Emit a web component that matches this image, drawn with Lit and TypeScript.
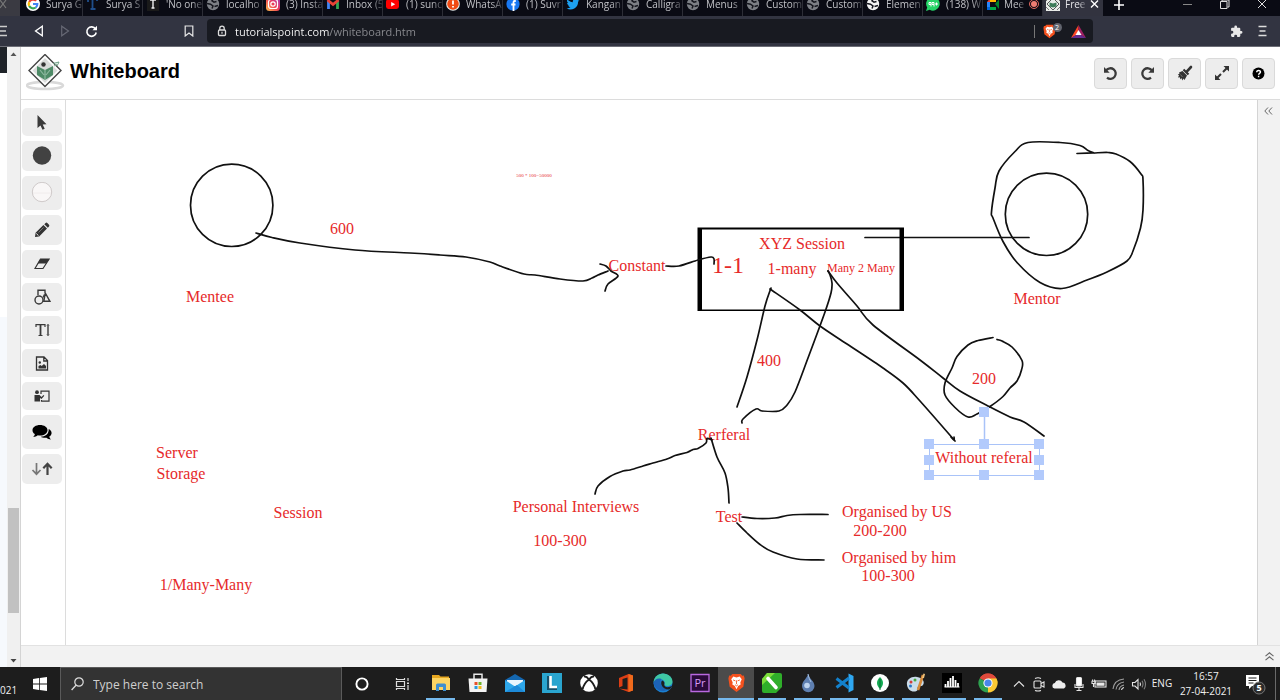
import { LitElement, html, svg, css } from "lit";
import { customElement } from "lit/decorators.js";
import { classMap } from "lit/directives/class-map.js";

type Pt = [number, number];

/** Turns a list of sampled pen points into a smooth path. */
function stroke(points: Pt[]): string {
  let d = `M${points[0][0]} ${points[0][1]}`;
  for (let i = 0; i < points.length - 1; i++) {
    const p0 = points[Math.max(i - 1, 0)];
    const p1 = points[i];
    const p2 = points[i + 1];
    const p3 = points[Math.min(i + 2, points.length - 1)];
    const c = [
      p1[0] + (p2[0] - p0[0]) / 6, p1[1] + (p2[1] - p0[1]) / 6,
      p2[0] - (p3[0] - p1[0]) / 6, p2[1] - (p3[1] - p1[1]) / 6,
      p2[0], p2[1],
    ].map((n) => n.toFixed(1));
    d += `C${c.join(" ")}`;
  }
  return d;
}

const STROKES: Pt[][] = [
  [[256, 233], [272, 237.5], [300, 243], [355, 250], [410, 253], [440, 255], [466, 257], [490, 262], [500, 266], [524, 274], [535, 275], [560, 279], [583, 281], [592, 278], [598, 275], [608, 271]],
  [[600, 264], [606, 266], [611, 271], [618, 276], [608, 284], [605, 291]],
  [[666, 266], [679, 266], [698, 260], [711, 257], [714, 259], [714, 264]],
  [[771, 288], [765, 306], [757, 340], [747, 377], [737, 407]],
  [[770, 289], [800, 310], [820, 326], [847, 344], [883, 368], [903, 383], [920, 401], [955, 441]],
  [[951, 437], [954, 440], [954, 437]],
  [[828, 271], [830, 275], [832, 283], [831, 293], [825, 312], [808, 358], [795, 392], [787, 405], [779, 411], [762, 411], [756, 409], [743, 419], [742, 423]],
  [[828, 271], [837, 283], [857, 306], [873, 325], [920, 360], [943, 378], [960, 391], [988, 406], [1010, 417], [1024, 422], [1044, 436]],
  [[1077, 153.5], [1093, 153], [1108, 152.5], [1116, 154], [1130, 161.5], [1141, 174], [1143, 180], [1143, 210], [1140.5, 228], [1133, 251], [1127, 261], [1107, 272], [1087, 280], [1062, 288.5], [1040, 282.5], [1017, 262.5], [1003, 241.5], [993, 218], [991.5, 212], [995, 188], [999, 171], [1015, 151.5], [1028, 142.5], [1060, 142.5], [1080, 145.5], [1088, 150.5], [1094, 153]],
  [[993, 337.5], [978, 340.5], [968, 345], [957, 356.5], [952, 368], [945, 383], [945, 395], [955, 407.5], [968, 417], [977, 414], [990, 406.5], [1003, 396.5], [1010, 388], [1017, 381], [1021.5, 370], [1022, 360.5], [1012, 347], [1002, 341], [997, 339.5]],
  [[712, 440], [707, 438.5], [706, 443], [698, 448.5], [693, 449.5], [687, 452.5], [675, 455.5], [667, 459], [653, 463], [643, 466], [630, 470], [623, 471], [610, 476.5], [598, 486], [595, 494]],
  [[711, 438], [717, 457], [725, 473], [728, 488], [729, 503]],
  [[742, 517], [757, 518.5], [775, 518], [787, 515.5], [800, 514.5], [828, 514.5]],
  [[737, 523], [747, 533], [760, 544.5], [773, 552], [797, 559], [824, 560]],
];

const LABELS: { x: number; y: number; text: string; size?: string }[] = [
  { x: 342, y: 234, text: "600" },
  { x: 534, y: 177, text: "500 * 100=50000", size: "tiny" },
  { x: 210, y: 302, text: "Mentee" },
  { x: 637, y: 271, text: "Constant" },
  { x: 802, y: 249, text: "XYZ Session" },
  { x: 728, y: 273, text: "1-1", size: "large" },
  { x: 792, y: 274, text: "1-many" },
  { x: 861, y: 272, text: "Many 2 Many", size: "small" },
  { x: 1037, y: 304, text: "Mentor" },
  { x: 769, y: 366, text: "400" },
  { x: 984, y: 384, text: "200" },
  { x: 724, y: 440, text: "Rerferal" },
  { x: 984, y: 463, text: "Without referal" },
  { x: 177, y: 458, text: "Server" },
  { x: 181, y: 479, text: "Storage" },
  { x: 298, y: 518, text: "Session" },
  { x: 206, y: 590, text: "1/Many-Many" },
  { x: 576, y: 512, text: "Personal Interviews" },
  { x: 560, y: 546, text: "100-300" },
  { x: 729, y: 522, text: "Test" },
  { x: 897, y: 517, text: "Organised by US" },
  { x: 880, y: 536, text: "200-200" },
  { x: 899, y: 563, text: "Organised by him" },
  { x: 888, y: 581, text: "100-300" },
];

const HANDLES: Pt[] = [
  [929, 444], [984, 444], [1039, 444], [929, 460], [1039, 460],
  [929, 475], [984, 475], [1039, 475], [984, 412],
];

const globe = (bg: string, fg: string) => svg`<svg width="14" height="14" viewBox="0 0 14 14"><circle cx="7" cy="7" r="6.200" fill=${bg}/><path d="M1 6.500 4.500 7.200 7 9 6 11.500M7.500 1.500 6 3.800l2 1.400 2.500-.7M8.500 9.500l3.500-1" fill="none" stroke=${fg} stroke-width="1.500"/></svg>`;

const FAV: Record<string, unknown> = {
  google: svg`<svg width="14" height="14" viewBox="0 0 14 14"><circle cx="7" cy="7" r="7" fill="#fff"/><g fill="none" stroke-width="2.200"><path d="M10.200 3.800A4.400 4.400 0 0 0 3.200 5" stroke="#ea4335"/><path d="M3.200 5a4.400 4.400 0 0 0 0 4" stroke="#fbbc05"/><path d="M3.200 9a4.400 4.400 0 0 0 6.600 1.500" stroke="#34a853"/><path d="M9.800 10.500A4.400 4.400 0 0 0 11.300 7H7" stroke="#4285f4"/></g></svg>`,
  tt: svg`<svg width="14" height="14" viewBox="0 0 14 14"><path d="M2 5V2h9v2M6.500 2v10M4.500 12h5" stroke="#1f4e8c" stroke-width="1.800" fill="none"/></svg>`,
  tw: svg`<svg width="14" height="14" viewBox="0 0 14 14"><path d="M1 0h12v14H1z" fill="#1a1a1a"/><path d="M4 3h6M7 3v8M5.500 11h3" stroke="#f0f0f0" stroke-width="1.400"/></svg>`,
  globe: globe("#7d8086", "#16171f"),
  globeLight: globe("#f4f4f4", "#16171f"),
  insta: svg`<svg width="14" height="14" viewBox="0 0 14 14"><defs><linearGradient id="ig" x1="0" y1="1" x2="1" y2="0"><stop offset="0" stop-color="#fdc04a"/><stop offset=".5" stop-color="#ee3a55"/><stop offset="1" stop-color="#9a37c4"/></linearGradient></defs><rect width="14" height="14" rx="3.500" fill="url(#ig)"/><rect x="2.500" y="2.500" width="9" height="9" rx="2.600" fill="none" stroke="#fff" stroke-width="1.200"/><circle cx="7" cy="7" r="2.200" fill="none" stroke="#fff" stroke-width="1.200"/></svg>`,
  gmail: svg`<svg width="14" height="14" viewBox="0 0 14 14"><path d="M2.500 12V3.500" stroke="#4285f4" stroke-width="2.800"/><path d="M11.500 12V3.500" stroke="#34a853" stroke-width="2.800"/><path d="M1.500 3 7 7.500 12.500 3" fill="none" stroke="#ea4335" stroke-width="2.800"/></svg>`,
  youtube: svg`<svg width="14" height="14" viewBox="0 0 14 14"><rect x="0" y="2.500" width="13" height="9.500" rx="2.400" fill="#f00"/><path d="m5.200 5 4 2.300-4 2.300z" fill="#fff"/></svg>`,
  alert: svg`<svg width="14" height="14" viewBox="0 0 14 14"><circle cx="7" cy="7" r="6.800" fill="#e8f0f0"/><circle cx="7" cy="7" r="5.800" fill="#f04a14"/><path d="M7 3.500v4M7 9v1.600" stroke="#fff" stroke-width="1.800"/></svg>`,
  facebook: svg`<svg width="14" height="14" viewBox="0 0 14 14"><circle cx="7" cy="7" r="6.600" fill="#1877f2"/><path d="M9.800 4H8.600c-.8 0-1.100.5-1.100 1.200V14M5.200 7.500h4.300" stroke="#fff" stroke-width="1.800" fill="none"/></svg>`,
  twitter: svg`<svg width="14" height="14" viewBox="0 0 24 24"><path fill="#1da1f2" d="M23 5.500c-.8.400-1.700.6-2.600.7.900-.6 1.600-1.400 2-2.500-.9.500-1.800.9-2.900 1.100a4.500 4.500 0 0 0-7.700 4.100C8 8.700 4.700 6.900 2.500 4.200a4.500 4.500 0 0 0 1.400 6c-.7 0-1.400-.2-2-.5 0 2.200 1.500 4 3.600 4.500-.7.200-1.400.2-2 .1.600 1.800 2.200 3.100 4.200 3.100A9 9 0 0 1 1 19.300 12.800 12.800 0 0 0 20.700 8c.9-.7 1.700-1.500 2.300-2.500z"/></svg>`,
  whatsapp: svg`<svg width="14" height="14" viewBox="0 0 14 14"><path d="M7 0a6.800 6.800 0 1 1-3.300 12.800L0 14l1.200-3.500A6.800 6.800 0 0 1 7 0z" fill="#25d366"/><path d="M3 5.500h2v2H3zm0 2h2v2M6 5.500h2v2H6zm2 2v2M9 7h3M10.500 5.500v3" stroke="#fff" fill="none"/></svg>`,
  meet: svg`<svg width="14" height="14" viewBox="0 0 14 14"><path d="M1 5l3-3.500V5z" fill="#ea4335"/><path d="M1 5h3v5H1z" fill="#2684fc"/><path d="M1 10h3v3H1z" fill="#0066da"/><path d="M4 10h6v3H4z" fill="#00ac47"/><path d="M4 1.500h6V5H4z" fill="#ffba00"/><path d="M9 7l4-4.500v9.500z" fill="#00832d"/></svg>`,
  point: svg`<svg width="14" height="14" viewBox="0 0 14 14"><path d="M0 0h14v14H0z" fill="#e9ece9"/><path d="M7 1l6 6-6 6-6-6z" fill="none" stroke="#333" stroke-width=".8"/><path d="M3.500 5.500 7 6.500l3.500-1v4L7 10.500l-3.500-1z" fill="#3f7d5a"/><path d="M0 4l3-3M11 1l3 3M0 10l3 3M14 10l-3 3" stroke="#555" stroke-width=".8"/></svg>`,
};

const TABS: [string, string][] = [
  ["google", "Surya G"], ["tt", "Surya S"], ["tw", "'No one"], ["globe", "localho"],
  ["insta", "(3) Insta"], ["gmail", "Inbox (5"], ["youtube", "(1) sunc"], ["alert", "WhatsA"],
  ["facebook", "(1) Suvr"], ["twitter", "Kangan"], ["globe", "Calligra"], ["globe", "Menus"],
  ["globe", "Custom"], ["globe", "Custom"], ["globeLight", "Elemen"], ["whatsapp", "(138) W"],
];

const lion = (w: number, h: number) => svg`<svg width=${w} height=${h} viewBox="0 0 16 19"><path d="M4 1h8l1.500 1.600 1.500-.2.700 2.800L14.500 13 8 18 1.500 13 .3 5.200l.7-2.800 1.500.2z" fill="#f4511e"/><path d="M8 4.200l3-.8 2 2.600-1.400 3 .4 2L9.600 12.400 8 15.400l-1.600-3L4 11l.4-2L3 6l2-2.600z" fill="#fff"/><path d="M4.800 6.600l2.200.9M11.200 6.600 9 7.500M8 7v3.500M6.600 11.200 8 12.200l1.400-1" stroke="#f4511e" stroke-width=".8" fill="none"/></svg>`;

const TOOLS: { label: string; size: string; icon: unknown }[] = [
  { label: "Select", size: "short", icon: svg`<svg width="16" height="16" viewBox="0 0 16 16"><path d="M3.500 1v13l3-2.600 2 4.300 2.200-1-2-4.200 3.800-.3z" fill="#3a3a3a"/></svg>` },
  { label: "Line colour", size: "mid", icon: svg`<svg width="20" height="20" viewBox="0 0 20 20"><circle cx="10" cy="9.500" r="9.200" fill="#424242"/></svg>` },
  { label: "Fill colour", size: "tall", icon: svg`<svg width="22" height="22" viewBox="0 0 22 22"><circle cx="11" cy="10" r="9.700" fill="#f9f7f7" stroke="#cfcaca"/><path d="M2 11h18" stroke="#f0ecec"/></svg>` },
  { label: "Pencil", size: "mid", icon: svg`<svg width="16" height="16" viewBox="0 0 16 16"><path d="M1 15l.6-4.200L9.400 3l3.600 3.600-7.800 7.800zM10.300 2.200l1.300-1.300q.9-.6 1.700.1l1.700 1.700q.7.900 0 1.700l-1.200 1.300z" fill="#333"/><path d="M2.300 11.500l2.200 2.200" stroke="#ededed"/><path d="M4.500 10.500l5-5" stroke="#888" stroke-width=".8"/></svg>` },
  { label: "Eraser", size: "short", icon: svg`<svg width="16" height="12" viewBox="0 0 16 12"><path d="M6.500 1H15.200L9 10.500H1z" fill="none" stroke="#333" stroke-width="1.200"/><path d="M3.500 5.500h8.800L15.200 1H6.500z" fill="#333"/></svg>` },
  { label: "Shapes", size: "short", icon: svg`<svg width="17" height="16" viewBox="0 0 17 16" fill="none" stroke="#3a3a3a" stroke-width="1.400"><path d="M4 6V1.200h7V4M11.300 4l4.600 8.300H9.800z"/><circle cx="5" cy="11" r="4"/><path d="M9 8.500l1.500-3"/></svg>` },
  { label: "Text", size: "short", icon: svg`<svg width="15" height="14" viewBox="0 0 15 14" fill="none" stroke="#3a3a3a"><path d="M1 4V1.700h9V4" stroke-width="1.200"/><path d="M5.500 1.500v11" stroke-width="1.800"/><path d="M3.500 12.500h4"/><path d="M13 2v10" stroke-width="1.400"/><path d="M12 2.500 13 1.200l1 1.300M12 11.500l1 1.300 1-1.300" stroke-width=".9"/></svg>` },
  { label: "Image", size: "short", icon: svg`<svg width="14" height="15" viewBox="0 0 14 15" fill="none" stroke="#333" stroke-width="1.300"><path d="M1.500 1h7.500l3.500 3.500V14h-11zM8.800 1v4h3.700"/><path d="M3.500 12.500V10l2-1 1.200 1L9 8l2 2v2.500z" fill="#333" stroke="none"/><circle cx="4.800" cy="6.500" r="1.200" fill="#333" stroke="none"/></svg>` },
  { label: "Presentation", size: "short", icon: svg`<svg width="16" height="13" viewBox="0 0 16 13"><circle cx="3" cy="2.200" r="1.900" fill="#333"/><path d="M.5 5h5l2 2 2-2 .8.800L7.500 9 6 8v3.500H.5z" fill="#333"/><path d="M7 4V1.200h8v10H7.500V10" fill="none" stroke="#333" stroke-width="1.200"/></svg>` },
  { label: "Chat", size: "tall", icon: svg`<svg width="20" height="17" viewBox="0 0 20 17"><path d="M8 1c4.200 0 7.500 2.200 7.500 5.200S12.200 11.500 8 11.500c-.8 0-1.500 0-2.200-.2C4.500 12.300 3 13 1.200 13c1-.9 1.600-1.900 1.700-2.900C1.400 9.200.5 7.800.5 6.200.5 3.200 3.800 1 8 1z"/><path d="M16.700 5c1.800.9 2.900 2.300 2.900 3.900 0 1.500-.9 2.800-2.300 3.600.1 1.100.7 2 1.700 2.900-1.800-.1-3.300-.7-4.500-1.700-2.500.3-4.600-.2-5.800-1 4.600 0 8.300-2.700 8-7.700z"/></svg>` },
  { label: "Reorder", size: "mid", icon: svg`<svg width="22" height="14" viewBox="0 0 22 14" fill="none"><path d="M5.500 1v11M1.500 8l4 4.200 4-4.200" stroke="#777" stroke-width="1.700"/><path d="M16.500 13V2M12.300 6.200l4.200-4.400 4.200 4.400" stroke="#444" stroke-width="2.200"/></svg>` },
];

const ACTIONS: { label: string; icon: unknown }[] = [
  { label: "Undo", icon: svg`<svg width="15" height="15" viewBox="0 0 15 15"><path d="M3.200 4.300A5.300 5.300 0 1 1 4 11.600" fill="none" stroke="#3a3a3a" stroke-width="2.300"/><path d="M1 1v5.700h5.700z" fill="#3a3a3a"/></svg>` },
  { label: "Redo", icon: svg`<svg width="15" height="15" viewBox="0 0 15 15"><path d="M11.800 4.300A5.300 5.300 0 1 0 11 11.600" fill="none" stroke="#3a3a3a" stroke-width="2.300"/><path d="M14 1v5.700H8.300z" fill="#3a3a3a"/></svg>` },
  { label: "Clear", icon: svg`<svg width="16" height="16" viewBox="0 0 16 16"><path d="M14 2 9.500 6.800" stroke="#333" stroke-width="2.600" stroke-linecap="round"/><path d="M6.500 4.500l5 5" stroke="#333" stroke-width="2.200"/><path d="M5.500 6 10 10.500 7.500 15l-1.200-1.500L5.500 15.500 4.300 13l-1 1.500-.5-2.300L1 12.500l1-2.200L.8 9.500l1.700-.8L2 7.500z" fill="#333"/><path d="M3.500 9.500l2 2.500" stroke="#888" stroke-width=".7"/></svg>` },
  { label: "Full screen", icon: svg`<svg width="16" height="16" viewBox="0 0 16 16"><path d="M9.500 1H15v5.500zM1 9.500V15h5.500z" fill="#333"/><path d="M13 3 9 7M3 13l4-4" stroke="#333" stroke-width="2"/></svg>` },
  { label: "Help", icon: svg`<svg width="13" height="13" viewBox="0 0 13 13"><circle cx="6.500" cy="6.500" r="6"/><path d="M4.700 5.200c0-2.300 3.800-2.300 3.800-.1 0 1.300-1.900 1.300-1.900 2.600M6.600 8.700v1.500" stroke="#fff" stroke-width="1.400" fill="none"/></svg>` },
];

const sq = (inner: unknown) => svg`<svg width="20" height="20" viewBox="0 0 20 20">${inner}</svg>`;

const APPS: { label: string; wide?: boolean; run?: boolean; active?: boolean; icon: unknown }[] = [
  { label: "File Explorer", wide: true, run: true, icon: sq(svg`<path d="M1 2h7l1.500 1.500H18V17H1z" fill="#e8a820"/><path d="M1 5h18v12H1z" fill="#fcd462"/><path d="M5 18v-6q0-1.500 1.500-1.500h7q1.500 0 1.500 1.500v6h-3v-4H8v4z" fill="#3f8fcf"/>`) },
  { label: "Store", wide: true, icon: sq(svg`<path d="M6 6V1.200h8V6" fill="none" stroke="#e8e8e8" stroke-width="1.500"/><path d="M.5 5.500h19L18.500 19h-17z" fill="#f3f3f3"/><path d="M6.500 9h3v3h-3z" fill="#e8502a"/><path d="M10.500 9h3v3h-3z" fill="#6fb52c"/><path d="M6.500 13h3v3h-3z" fill="#2a9be0"/><path d="M10.500 13h3v3h-3z" fill="#f5b91a"/>`) },
  { label: "Mail", wide: true, icon: sq(svg`<path d="M0 7 10 1l10 6v12H0z" fill="#1467b0"/><path d="M2 7h16v6H2z" fill="#e9f5fd"/><path d="M0 7l10 6.500L20 7v12H0z" fill="#2ea7ea"/><path d="M0 19 12 12l8 7z" fill="#1d8ad8"/>`) },
  { label: "Lightshot", wide: true, icon: sq(svg`<path d="M0 0h20v20H0z" fill="#2aa5cf"/><path d="M7 3v12h8" fill="none" stroke="#14506b" stroke-width="4"/><path d="M8.500 3v11H15" fill="none" stroke="#fff" stroke-width="2.600"/>`) },
  { label: "Xbox", wide: true, icon: sq(svg`<circle cx="10" cy="10" r="8.800" fill="#fff"/><path d="M3.500 16.500Q5 10 10 6.500 15 10 16.500 16.500M5 3.200Q8 3.500 10 6.500 12 3.500 15 3.200" fill="none" stroke="#1d1d1d" stroke-width="1.900"/>`) },
  { label: "Office", wide: true, icon: sq(svg`<path d="M3 5 12.500 1 17 2.500v15L12.500 19 3 15.500l8.500 1V4.500L6.500 6v7L3 14.500z" fill="#dc3e15"/><path d="M12.500 1 17 2.500v15L12.500 19z" fill="#f06a1c"/>`) },
  { label: "Edge", wide: true, icon: sq(svg`<circle cx="10" cy="10" r="9.500" fill="#1a7fd0"/><path d="M.5 9.500C1 4 5 .5 10 .5c5.500 0 9.500 4 9.500 8 0 3-2.500 4.500-5 4.500-2.300 0-3.500-1-3-2 1.500-3-3-6.500-7-4.500C2.500 7.400 1 8.500.5 9.500z" fill="#3fc7a4"/><path d="M.5 10C1 6.500 5 4.500 8.500 6 6.500 8 7 15 15 16.500A9.500 9.500 0 0 1 .5 10z" fill="#1c63b7"/><path d="M11.300 11c-.8 3 3.700 4.500 8 1.500-.7 1.800-2 3.200-3 4C10 17 6.500 11 9 7.500c2 .5 2.800 2 2.300 3.500z" fill="#1d1d1d"/>`) },
  { label: "Premiere Pro", wide: true, icon: sq(svg`<path d="M1 1.500h18v17H1z" fill="#2a0a3a" stroke="#b968e0" stroke-width="1.300"/><text class="pr" x="10" y="14" text-anchor="middle">Pr</text>`) },
  { label: "Brave", active: true, run: true, icon: lion(17, 20) },
  { label: "CorelDRAW", run: true, icon: sq(svg`<path d="M0 6l5-6h13q2 0 2 2v12l-6 6H2q-2 0-2-2z" fill="#2fae2a"/><path d="M0 12V6l5-6h8z" fill="#7bdc3a"/><path d="M6 5.500l8 9" stroke="#fff" stroke-width="3.600" stroke-linecap="round"/>`) },
  { label: "Rainmeter", run: true, icon: sq(svg`<path d="M10 1C9.500 5 4 8 4 13a6 6 0 0 0 12.500 0C16.500 8 10.500 5 10 1z" fill="#5e7fb0"/><circle cx="9" cy="12.500" r="2.800" fill="#bdd3ee"/><path d="M10 1q1 5 3 8" stroke="#a8c3e6" fill="none"/>`) },
  { label: "Visual Studio Code", run: true, icon: sq(svg`<path d="M14.500.5 19.500 3v14l-5 2.500z" fill="#2fa8f2"/><path d="M15 5 2.500 14.500M15 15 2.500 5.500" stroke="#1381cc" stroke-width="3"/>`) },
  { label: "MongoDB", run: true, icon: sq(svg`<circle cx="10" cy="10" r="9" fill="#fff"/><path d="M10 4c4 4 4 8 0 12-4-4-4-8 0-12z" fill="#13aa52"/><path d="M10 6v11" stroke="#0b6e36"/>`) },
  { label: "Paint", run: true, icon: sq(svg`<path d="M1 12C0 6 6 3 11 4c6 1 8 5 6 8-1.500 2-4 0-5 1.500-1 1.800 1 3-1.500 4.500C6 20 1.500 16.500 1 12z" fill="#c9dcea"/><circle cx="5" cy="9" r="1.500" fill="#d43c3c"/><circle cx="9" cy="7" r="1.500" fill="#49a942"/><circle cx="4.500" cy="13" r="1.500" fill="#2c76c9"/><path d="M12 17 17 2" stroke="#d58a3c" stroke-width="2.600"/><path d="M16 5l1.500-4.500 1.500.5L18 5z" fill="#f0c27a"/>`) },
  { label: "Equalizer", run: true, icon: sq(svg`<path d="M0 0h20v20H0z" fill="#000"/><path d="M3.500 14v-3M6 14V8M8.500 14V5M11 14V3M13.500 14V7M16 14v-4" stroke="#fff" stroke-width="1.800"/><path d="M2.500 14h15" stroke="#fff"/>`) },
  { label: "Chrome", run: true, icon: sq(svg`<path d="M10 10 1.800 5.200A9.400 9.400 0 0 1 18.200 5.200z" fill="#e04a3c"/><path d="M10 10l8.200-4.800A9.400 9.400 0 0 1 10 19.500z" fill="#fbc935"/><path d="M10 10v9.500A9.400 9.400 0 0 1 1.800 5.200z" fill="#2da14f"/><path d="M10 5.200h8.200a9.400 9.400 0 0 1 1 4.800H10z" fill="#fbc935"/><path d="M1.800 5.200A9.400 9.400 0 0 1 18.200 5.200H10z" fill="#e04a3c"/><circle cx="10" cy="10" r="4.600" fill="#fff"/><circle cx="10" cy="10" r="3.600" fill="#4a86e8"/>`) },
];

const TRAY: { label: string; icon: unknown }[] = [
  { label: "Show hidden icons", icon: svg`<path d="M3 10.500 8 5.500l5 5"/>` },
  { label: "Meet Now", icon: svg`<rect x="3" y="5" width="7" height="7" rx="1"/><path d="M10 7.500l3-1.500v5l-3-1.500M4 2.500q3-1.500 6 0M4 14.500q3 1 6 0"/>` },
  { label: "OneDrive", icon: svg`<path d="M3.500 12.500a2.800 2.800 0 0 1 .3-5.500 4.200 4.200 0 0 1 7.700-.5 3.200 3.200 0 0 1 1.500 6z" fill="#eee" stroke="none"/>` },
  { label: "Microphone", icon: svg`<rect x="5.500" y="1.500" width="5" height="8.500" rx="1" fill="#fff"/><path d="M4 8v3.500h8V8M8 12v2.500M5.500 14.500h5"/>` },
  { label: "Battery", icon: svg`<rect x="4" y="5" width="11" height="6"/><path d="M6 7h7v2.200H6z" fill="#eee"/><path d="M2.500 11V7.500M1 7.500V5.200h3.200v2.300zM1.600 5V3.500M3.600 5V3.500"/>` },
  { label: "Wi-Fi", icon: svg`<path d="M2 13Q3 4 13 3M5 13.500Q6 7 13 6M8 14q.5-4 5-5" opacity=".65"/><path d="M10.500 14q.3-2 2.500-2.500"/>` },
  { label: "Volume", icon: svg`<path d="M1.500 6.500h2.500l3-3v9.500l-3-3H1.500z"/><path d="M9 6.500q1 1.700 0 3.400"/><path d="M11 4.800q2 3.300 0 6.600M13 3.200q3 5 0 10" opacity=".5"/>` },
];

@customElement("app-root")
export class AppRoot extends LitElement {
  static styles = css`
    :host {
      display: flex;
      flex-direction: column;
      height: 100vh;
      overflow: hidden;
      background: #fff;
      font-family: "Open Sans", "Noto Sans", sans-serif;
    }
    * { box-sizing: border-box; }
    svg { display: block; flex: none; }
    button {
      display: flex;
      align-items: center;
      justify-content: center;
      margin: 0;
      padding: 0;
      border: 0;
      background: none;
      color: inherit;
      font: inherit;
    }

    .tabs {
      display: flex;
      flex: none;
      height: 16px;
      background: #0a0b14;
      color: #c0c1c6;
      font-size: 10px;
    }
    .stub {
      flex: none;
      justify-content: flex-start;
      width: 20px;
      margin-right: 3px;
      background: #3a3a42;
    }
    .tab {
      flex: 0 1 60px;
      align-items: flex-start;
      justify-content: flex-start;
      gap: 6px;
      min-width: 0;
      height: 16px;
      padding-left: 3px;
      border-right: 1px solid #2c2d36;
    }
    .tab svg { margin-top: -3px; }
    .tab-title {
      flex: 1;
      min-width: 0;
      margin-top: -4px;
      line-height: 16px;
      text-align: left;
      white-space: nowrap;
      mask-image: linear-gradient(90deg, #000 70%, rgb(0 0 0 / 25%));
    }
    .tab.current { background: #32333f; border-right: 0; color: #e4e4e8; }
    .tab.current .tab-title, .tab.meet .tab-title { flex: 0 0 20px; }
    .tab.meet { gap: 4px; }
    .tab.current { gap: 5px; }
    .new-tab { width: 32px; height: 9px; }
    .window-controls { display: flex; margin-left: auto; }
    .window-controls button { width: 37px; height: 9px; }

    .toolbar {
      display: flex;
      flex: none;
      align-items: center;
      height: 31px;
      background: #323441;
      border-bottom: 1px solid #6c6d76;
      color: #fff;
    }
    .toolbar button { width: 26px; height: 26px; }
    .toolbar .edge { width: 7px; overflow: hidden; justify-content: flex-end; margin-right: 19px; }
    .toolbar .bookmark { margin: 0 5px 0 72px; }
    .address {
      display: flex;
      flex: 0 1 886px;
      align-items: center;
      height: 24px;
      padding: 0 2px 0 10px;
      border-radius: 4px;
      background: #181a21;
    }
    .url {
      flex: 1;
      min-width: 0;
      margin: 0 0 0 8px;
      padding: 0;
      border: 0;
      background: linear-gradient(90deg, #fff 94px, #8c8d92 94px);
      background-clip: text;
      -webkit-text-fill-color: transparent;
      color: #fff;
      font: 11px "Open Sans", sans-serif;
    }
    .shield-count {
      margin: 0 0 8px -3px;
      width: 9px;
      height: 9px;
      border-radius: 5px;
      background: #62656f;
      font-size: 7px;
      line-height: 9px;
      text-align: center;
    }
    .divider { width: 1px; height: 13px; margin-right: 4px; background: #777; }
    .toolbar .extensions { margin-left: auto; }
    .toolbar .menu { margin-right: 5px; }

    .page { display: flex; flex: 1; min-height: 0; }
    .behind {
      flex: none;
      width: 7px;
      background: linear-gradient(#1f2329 26px, #fff 26px 270px, #f6f9fd 270px);
    }
    .scrollbar {
      display: flex;
      flex-direction: column;
      flex: none;
      width: 14px;
      background: #f0f0f0;
      border-right: 1px solid #d4d4d4;
    }
    .scrollbar button { height: 14px; }
    .track { display: flex; flex-direction: column; flex: 1; padding: 0 1px; }
    .thumb { margin-top: auto; margin-bottom: 40px; height: 105px; background: #c1c1c1; }

    .app { display: flex; flex-direction: column; flex: 1; min-width: 0; }
    .header {
      display: flex;
      flex: none;
      align-items: center;
      height: 53px;
      padding: 0 5px;
      border-bottom: 1px solid #dcdcdc;
    }
    .title {
      margin: 0 auto 4px 4px;
      color: #000;
      font: bold 20px/24px "Liberation Sans", Arial, sans-serif;
    }
    .actions { display: flex; gap: 4px; }
    .actions button {
      width: 33px;
      height: 31px;
      border: 1px solid #dadada;
      border-radius: 4px;
      background: #ededed;
    }
    .work { display: flex; flex: 1; min-height: 0; }
    .tools {
      display: flex;
      flex-direction: column;
      flex: none;
      gap: 5px;
      width: 45px;
      padding: 8px 3px 0 1px;
      border-right: 1px solid #dcdcdc;
    }
    .tools button { flex: none; border-radius: 5px; background: #ededed; }
    .tools .short { height: 28px; }
    .tools .mid { height: 30px; }
    .tools .tall { height: 34px; }
    .board { flex: 1; min-width: 0; overflow: hidden; }
    .board svg { width: 100%; height: 100%; }
    .board text {
      fill: #e62a2a;
      font: 16px "Liberation Serif", "Times New Roman", serif;
      text-anchor: middle;
    }
    .board .large { font-size: 24px; }
    .board .small { font-size: 12px; }
    .board .tiny { font-size: 5px; }
    .rail {
      flex: none;
      width: 23px;
      padding-top: 5px;
      border-left: 1px solid #d4d4d4;
      background: #f2f2f2;
    }
    .rail button { width: 20px; height: 12px; }
    .footer {
      display: flex;
      flex: none;
      align-items: center;
      justify-content: flex-end;
      height: 22px;
      border-top: 1px solid #e2e2e2;
      background: #f2f2f2;
    }
    .footer button { width: 22px; height: 20px; }

    .taskbar {
      display: flex;
      flex: none;
      align-items: stretch;
      height: 33px;
      background: #1d1d1d;
      color: #f0f0f0;
      font-size: 10px;
      line-height: 15px;
    }
    .cut { flex: none; width: 20px; padding-top: 16px; }
    .start { flex: none; width: 40px; }
    .search {
      display: flex;
      align-items: center;
      flex: 0 1 282px;
      padding: 0 10px;
      gap: 9px;
      border: 1px solid #5a5a5a;
      border-bottom: 0;
      background: #333;
    }
    .search input {
      flex: 1;
      min-width: 0;
      padding: 0;
      border: 0;
      outline: 0;
      background: none;
      color: #fff;
      font: 12px "Open Sans", sans-serif;
    }
    .search input::placeholder { color: #cfcfcf; opacity: 1; }
    .sys { flex: none; width: 40px; }
    .launch { flex: 0 0 36px; border-bottom: 2px solid transparent; }
    .launch.wide { flex-basis: 37px; }
    .launch.run { border-bottom-color: #76b9ed; }
    .launch.active { background: #4b4b4b; }
    .launch:not(.active).run { margin: 0 4px; flex-basis: 28px; }
    .launch:not(.active).run.wide { flex-basis: 29px; }
    .pr { fill: #d59bf6; font: 11px "Open Sans", sans-serif; }
    .tray { display: flex; flex: none; margin-left: auto; }
    .tray button { width: 20px; }
    .tray .lang { width: 26px; }
    .tray .clock { flex-direction: column; width: 62px; }
    .tray .notes { width: 38px; }
    .note-count { fill: #fff; font: bold 9px "Open Sans", sans-serif; }
    .tray .peek { width: 5px; border-left: 1px solid #6a6a6a; }
  `;

  private renderTabs() {
    return html`
      <nav class="tabs" aria-label="Tabs">
        <button class="stub" aria-label="Close tab"><svg width="8" height="16" viewBox="0 0 8 16"><path d="M0 0l6 8M6 0 0 8" stroke="#777" stroke-width="1.200"/></svg></button>
        ${TABS.map(([icon, title]) => html`<button class="tab">${FAV[icon]}<span class="tab-title">${title}</span></button>`)}
        <button class="tab meet">${FAV.meet}<span class="tab-title">Mee</span><svg width="12" height="14" viewBox="0 0 12 14"><circle cx="6" cy="7" r="4.500" fill="none" stroke="#e0675e"/><circle cx="6" cy="7" r="3" fill="#ef7d73"/></svg></button>
        <button class="tab current">${FAV.point}<span class="tab-title">Free</span><svg width="9" height="14" viewBox="0 0 9 14"><path d="M1 3.500l7 7M8 3.500l-7 7" stroke="#fff" stroke-width="1.400"/></svg></button>
        <button class="new-tab" aria-label="New tab"><svg width="10" height="10" viewBox="0 0 10 10"><path d="M5 0v10M0 5h10" stroke="#fff" stroke-width="1.600"/></svg></button>
        <div class="window-controls">
          <button aria-label="Minimize"><svg width="10" height="10" viewBox="0 0 10 10"><path d="M0 4.500h9" stroke="#888"/></svg></button>
          <button aria-label="Restore"><svg width="10" height="10" viewBox="0 0 10 10" fill="none" stroke="#ddd"><path d="M.5 1.500h6.500v7H.5zM2 1V0h7v7H7.500"/></svg></button>
          <button aria-label="Close window"><svg width="10" height="10" viewBox="0 0 10 10"><path d="M1 0l8 8M9 0 1 8" stroke="#ddd"/></svg></button>
        </div>
      </nav>`;
  }

  private renderToolbar() {
    return html`
      <div class="toolbar">
        <button class="edge" aria-label="Sidebar"><svg width="8" height="12" viewBox="0 0 8 12"><path d="M0 1.500h8M0 6h7M0 10.500h8" stroke="#ccc" stroke-width="1.400"/></svg></button>
        <button aria-label="Back"><svg width="10" height="12" viewBox="0 0 10 12"><path d="M8.300 1.200v9.600L1.500 6z" fill="none" stroke="#fff" stroke-width="1.300"/></svg></button>
        <button aria-label="Forward"><svg width="10" height="12" viewBox="0 0 10 12"><path d="M1.700 1.200v9.600L8.500 6z" fill="none" stroke="#666874" stroke-width="1.200"/></svg></button>
        <button aria-label="Reload"><svg width="13" height="13" viewBox="0 0 13 13"><path d="M10.500 4A4.700 4.700 0 1 0 11.200 7.500" fill="none" stroke="#fff" stroke-width="1.600"/><path d="M12 .8v4.500H7.500z" fill="#fff"/></svg></button>
        <button class="bookmark" aria-label="Bookmark"><svg width="10" height="12" viewBox="0 0 10 12"><path d="M1.200 1h7.600v10L5 8 1.200 11z" fill="none" stroke="#e8e8e8" stroke-width="1.200"/></svg></button>
        <div class="address">
          <svg width="10" height="12" viewBox="0 0 10 12"><path d="M2.800 5V3.300a2.200 2.200 0 0 1 4.400 0V5" fill="none" stroke="#ddd" stroke-width="1.300"/><rect x="1.500" y="5" width="7" height="5.500" rx="1" fill="none" stroke="#ddd" stroke-width="1.300"/><path d="M5 6.800v2" stroke="#ddd" stroke-width="1.200"/></svg>
          <input class="url" aria-label="Address" .value=${"tutorialspoint.com/whiteboard.htm"} />
          <span class="divider"></span>
          <button aria-label="Brave Shields">${lion(13, 15)}<span class="shield-count">2</span></button>
          <button aria-label="Rewards"><svg width="15" height="13" viewBox="0 0 15 13"><path d="M7.500 0 0 13l7.500-4z" fill="#ff4724"/><path d="M7.500 0 15 13 7.500 9z" fill="#9e1f63"/><path d="M0 13h15L7.500 8.500z" fill="#662d91"/><path d="M7.500 5l3 5h-6z" fill="#fff"/></svg></button>
        </div>
        <button class="extensions" aria-label="Extensions"><svg width="13" height="13" viewBox="0 0 24 24"><path fill="#e8e8e8" d="M20.500 11H19V7a2 2 0 0 0-2-2h-4V3.500a2.500 2.500 0 0 0-5 0V5H4a2 2 0 0 0-2 2v3.800h1.500a2.700 2.700 0 0 1 0 5.400H2V20a2 2 0 0 0 2 2h3.800v-1.500a2.700 2.700 0 0 1 5.400 0V22H17a2 2 0 0 0 2-2v-4h1.500a2.500 2.500 0 0 0 0-5z"/></svg></button>
        <button class="menu" aria-label="Menu"><svg width="9" height="12" viewBox="0 0 9 12"><path d="M.5 1.500h8M1.500 6h6M.5 10.500h8" stroke="#ddd" stroke-width="1.300"/></svg></button>
      </div>`;
  }

  private renderBoard() {
    return html`
      <main class="board">
        <svg role="img" aria-label="Whiteboard canvas">
          <g transform="translate(-66 -100)">
            <g fill="none" stroke="#111" stroke-width="1.700" stroke-linecap="round" stroke-linejoin="round">
              <circle cx="231.700" cy="205.300" r="41.200"/>
              <circle cx="1046.500" cy="214.300" r="41.200"/>
              <path d="M865 237.500H1029"/>
            </g>
            <path d="M697.500 227.500H904V311H697.500zM702 229.500V309.500H899.500V229.500z" fill="#000" fill-rule="evenodd"/>
            ${LABELS.map((l) => svg`<text class=${l.size ?? "body"} x=${l.x} y=${l.y}>${l.text}</text>`)}
            <g fill="none" stroke="#111" stroke-width="1.700" stroke-linecap="round" stroke-linejoin="round">
              ${STROKES.map((p) => svg`<path d=${stroke(p)}/>`)}
            </g>
            <g fill="none" stroke="#a9c3f8">
              <rect x="929.500" y="444.500" width="110" height="31"/>
              <path d="M984.500 412v32" stroke-width="1.500"/>
            </g>
            ${HANDLES.map(([x, y]) => svg`<rect x=${x - 5} y=${y - 5} width="10" height="10" fill="#b2cafc"/>`)}
          </g>
        </svg>
      </main>`;
  }

  private renderTaskbar() {
    return html`
      <footer class="taskbar">
        <span class="cut">021</span>
        <button class="start" aria-label="Start"><svg width="14" height="14" viewBox="0 0 14 14"><path d="M0 2l6-.9v5.500H0zM6.800 1 14 0v6.600H6.800zM0 7.400h6v5.500L0 12zM6.800 7.400H14V14l-7.200-1z" fill="#fff"/></svg></button>
        <label class="search">
          <svg width="13" height="14" viewBox="0 0 13 14"><circle cx="8" cy="5" r="4.200" fill="none" stroke="#ddd" stroke-width="1.200"/><path d="M5 8.200.6 13" stroke="#ddd" stroke-width="1.300"/></svg>
          <input type="text" aria-label="Search" placeholder="Type here to search" />
        </label>
        <button class="sys" aria-label="Cortana"><svg width="14" height="14" viewBox="0 0 14 14"><circle cx="7" cy="7" r="5.600" fill="none" stroke="#fff" stroke-width="1.900"/></svg></button>
        <button class="sys" aria-label="Task View"><svg width="15" height="14" viewBox="0 0 15 14" fill="none" stroke="#ddd" stroke-width="1.200"><path d="M1.500 4.500h8v5h-8zM1.500 1v1.500h8V1M1.500 13v-1.500h8V13M13 1v3M13 8v5"/><path d="M12 5.500h2v1.500h-2z" fill="#ddd" stroke="none"/></svg></button>
        ${APPS.map((a) => html`<button class=${classMap({ launch: true, wide: !!a.wide, run: !!a.run, active: !!a.active })} aria-label=${a.label}>${a.icon}</button>`)}
        <div class="tray">
          ${TRAY.map((t) => html`<button aria-label=${t.label}><svg width="16" height="16" viewBox="0 0 16 16" fill="none" stroke="#e4e4e4" stroke-width="1.100">${t.icon}</svg></button>`)}
          <button class="lang">ENG</button>
          <button class="clock"><span>16:57</span><span>27-04-2021</span></button>
          <button class="notes" aria-label="Notifications"><svg width="22" height="22" viewBox="0 0 22 22"><path d="M1 2h13v11H7l-3 3v-3H1z" fill="#fff"/><path d="M3.500 5h8M3.500 7.500h8M3.500 10h5" stroke="#1d1d1d"/><circle cx="14" cy="15" r="6" fill="#2c2c2c" stroke="#777"/><text class="note-count" x="14" y="18" text-anchor="middle">5</text></svg></button>
          <button class="peek" aria-label="Show desktop"></button>
        </div>
      </footer>`;
  }

  render() {
    return html`
      ${this.renderTabs()}
      ${this.renderToolbar()}
      <div class="page">
        <div class="behind"></div>
        <div class="scrollbar">
          <button aria-label="Scroll up"><svg width="7" height="5" viewBox="0 0 7 5"><path d="M3.500.5 6.500 4h-6z" fill="#555"/></svg></button>
          <div class="track"><div class="thumb"></div></div>
          <button aria-label="Scroll down"><svg width="7" height="5" viewBox="0 0 7 5"><path d="M3.500 4.500.5 1h6z" fill="#444"/></svg></button>
        </div>
        <div class="app">
          <header class="header">
            <svg width="40" height="38" viewBox="0 2 40 38"><ellipse cx="19" cy="33.500" rx="18" ry="3.500" fill="none" stroke="#d9d9d9" stroke-width="2.500"/><path d="M19 2.500 35 18.500 19 34.500 3 18.500z" fill="#fff" stroke="#444" stroke-width="1.400"/><path d="M19 6l12.500 12.500L19 31 6.500 18.500z" fill="#d9dbda"/><path d="M11 14l8 4 8-4v9l-8 5-8-5z" fill="#4d8a66"/><path d="M19 18v10M14 18l4 5M24 18l-4 5M28 14l3-2" stroke="#8fb8a0" stroke-width="1.200"/><circle cx="17.500" cy="12.500" r="2.200" fill="#333"/><path d="M27 11.500l6-1.500-2 4" stroke="#6ea287" fill="none"/></svg>
            <h1 class="title">Whiteboard</h1>
            <div class="actions">
              ${ACTIONS.map((a) => html`<button aria-label=${a.label}>${a.icon}</button>`)}
            </div>
          </header>
          <div class="work">
            <div class="tools">
              ${TOOLS.map((t) => html`<button class=${t.size} aria-label=${t.label}>${t.icon}</button>`)}
            </div>
            ${this.renderBoard()}
            <aside class="rail"><button aria-label="Expand panel"><svg width="9" height="8" viewBox="0 0 9 8"><path d="M4 .5.800 4 4 7.500M8 .5 4.800 4 8 7.500" fill="none" stroke="#666"/></svg></button></aside>
          </div>
          <div class="footer"><button aria-label="Expand chat"><svg width="9" height="9" viewBox="0 0 9 9"><path d="M.5 4.200 4.500.8l4 3.400M.5 8.200l4-3.400 4 3.400" fill="none" stroke="#666" stroke-width="1.100"/></svg></button></div>
        </div>
      </div>
      ${this.renderTaskbar()}`;
  }
}
